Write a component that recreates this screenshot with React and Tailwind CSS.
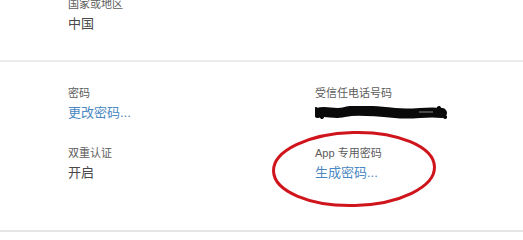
import React from 'react';

const font = { fontFamily: '"Liberation Sans", "Noto Sans CJK SC", sans-serif' };

const Field = ({ label, value, link, children }) => (
  <div className="relative flex flex-col gap-[2px]">
    <div className="text-[11px] leading-4 text-[#5c5c5c]">{label}</div>
    {children ? (
      children
    ) : (
      <div className={`text-[13px] leading-5 ${link ? 'text-[#4a88c2]' : 'text-[#484848]'}`}>{value}</div>
    )}
  </div>
);

// black marker scribble over the phone number
const Scribble = () => (
  <div className="h-5 flex items-center">
    <svg width="132" height="14" viewBox="0 0 132 14">
      <path
        d="M3 7 C 10 4, 20 9, 30 6 S 60 5, 80 7 S 110 5, 127 7"
        stroke="#0a0a0a"
        strokeWidth="10"
        strokeLinecap="round"
        fill="none"
      />
      <path d="M1 3 L 7 11 M 124 2 L 130 11" stroke="#0a0a0a" strokeWidth="4" strokeLinecap="round" />
      <path d="M104 6 L 118 6" stroke="#8a8a8a" strokeWidth="1" />
    </svg>
  </div>
);

const Circle = () => (
  <svg
    className="absolute left-[-45px] top-[-16px] pointer-events-none"
    width="168"
    height="80"
    viewBox="0 0 168 80"
  >
    <ellipse cx="84" cy="40" rx="80.5" ry="36.5" fill="none" stroke="#d0141b" strokeWidth="3" transform="rotate(-1.5 84 40)" />
  </svg>
);

export default function App() {
  return (
    <div className="w-[523px] h-[240px] overflow-hidden bg-white" style={font}>
      <section className="pl-[68px] -mt-[4px] pb-[26px]">
        <Field label="国家或地区" value="中国" />
      </section>
      <div className="h-[2px] bg-[#ececec]" />
      <section className="grid grid-cols-[247px_1fr] gap-y-[22px] pl-[68px] pt-[23px] pb-[47px]">
        <Field label="密码" value="更改密码..." link />
        <Field label="受信任电话号码">
          <Scribble />
        </Field>
        <Field label="双重认证" value="开启" />
        <Field label="App 专用密码">
          <div className="text-[13px] leading-5 text-[#4a88c2]">生成密码...</div>
          <Circle />
        </Field>
      </section>
      <div className="h-[2px] bg-[#e6e6e6]" />
    </div>
  );
}
